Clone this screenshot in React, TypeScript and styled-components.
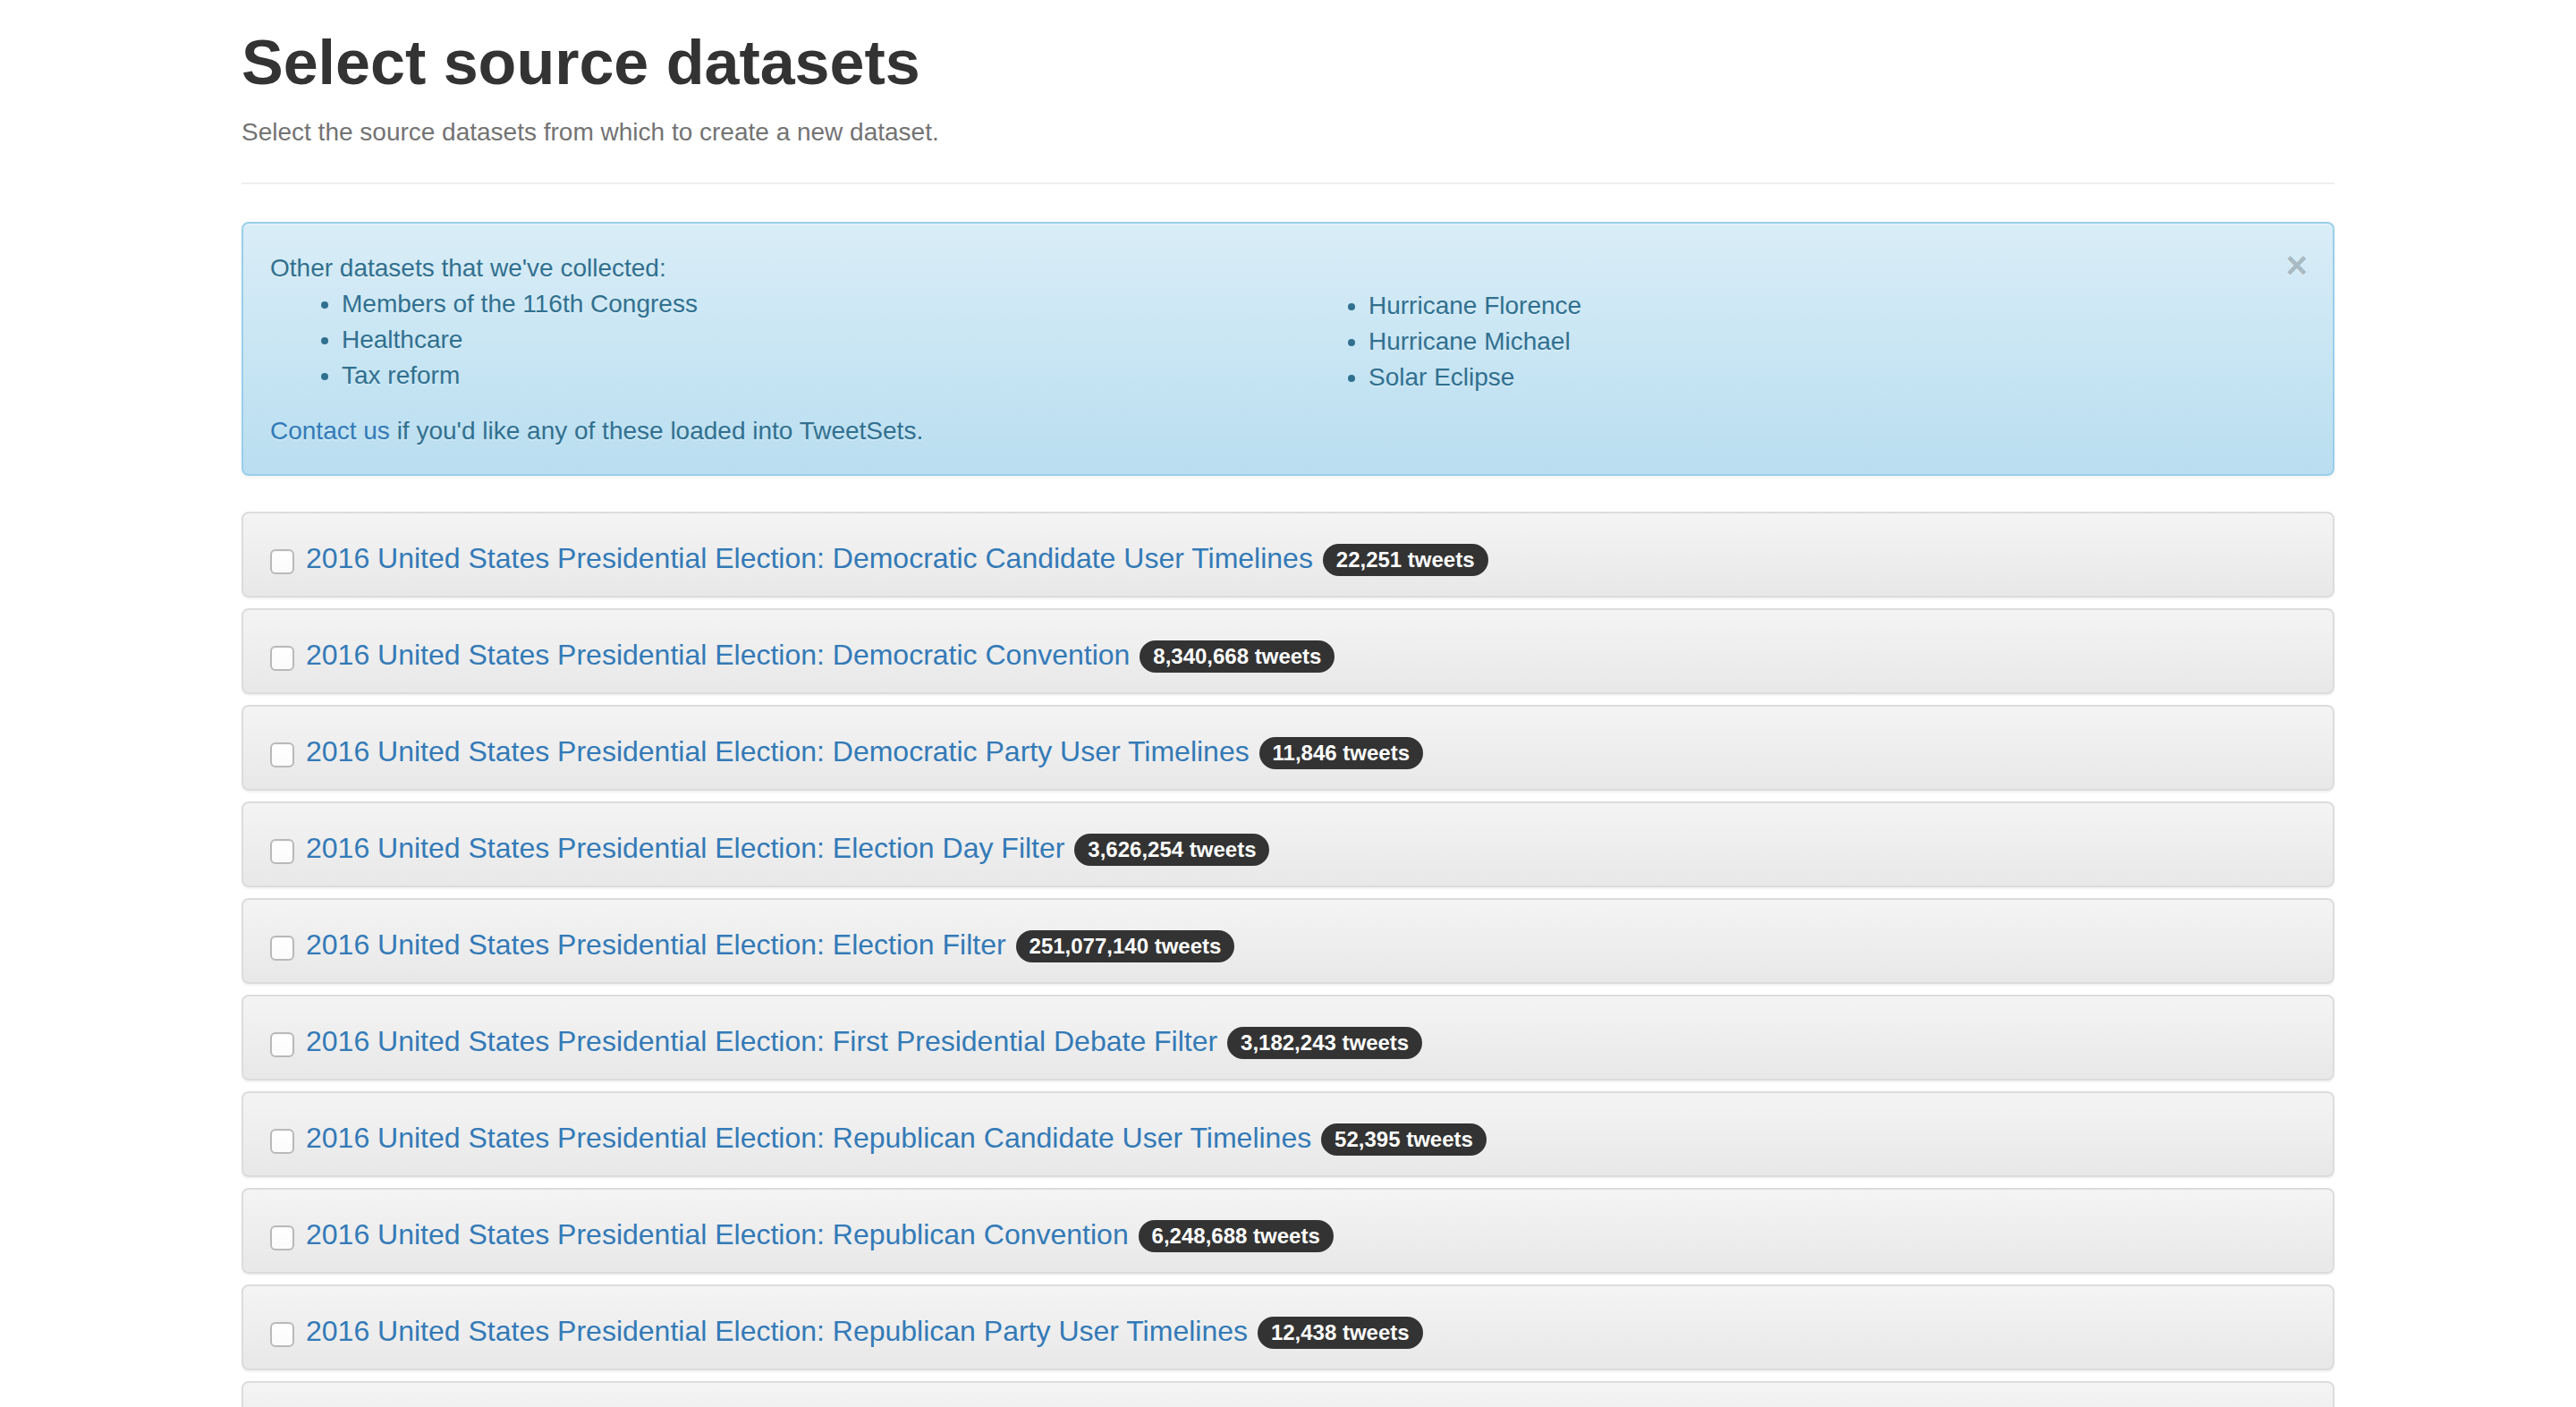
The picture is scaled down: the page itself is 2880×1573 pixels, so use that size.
import React from "react";
import styled, { createGlobalStyle } from "styled-components";

const GlobalStyle = createGlobalStyle`
  html, body {
    margin: 0;
    padding: 0;
    background: #ffffff;
  }
  body {
    font-family: "Liberation Sans", Arial, Helvetica, sans-serif;
    font-size: 28px;
    line-height: 40px;
    color: #333333;
  }
  * { box-sizing: border-box; }
`;

const Container = styled.div`
  max-width: 2340px;
  margin: 0 auto;
`;

const PageHeader = styled.header`
  padding-bottom: 16px;
  margin-bottom: 42px;
  border-bottom: 2px solid #eeeeee;
`;

const Title = styled.h1`
  margin: 30px 0 18px;
  font-size: 70px;
  line-height: 80px;
  font-weight: 700;
  color: #333333;
`;

const Lead = styled.p`
  margin: 0 0 20px;
  font-size: 28px;
  line-height: 40px;
  color: #737373;
`;

const Alert = styled.div`
  position: relative;
  padding: 30px 70px 28px 30px;
  margin-bottom: 40px;
  border: 2px solid #9acfea;
  border-radius: 8px;
  color: #31708f;
  background-image: linear-gradient(to bottom, #d9edf7 0%, #b9def0 100%);
  box-shadow: inset 0 2px 0 rgba(255, 255, 255, 0.25), 0 2px 4px rgba(0, 0, 0, 0.05);
  text-shadow: 0 2px 0 rgba(255, 255, 255, 0.2);
`;

const CloseButton = styled.button`
  position: absolute;
  top: 26px;
  right: 28px;
  padding: 0;
  border: 0;
  background: transparent;
  font-family: "Liberation Sans", Arial, sans-serif;
  font-size: 42px;
  font-weight: 700;
  line-height: 1;
  color: #000000;
  opacity: 0.2;
  text-shadow: 0 2px 0 #ffffff;
  cursor: pointer;
`;

const AlertText = styled.p`
  margin: 0;
`;

const Columns = styled.div`
  display: grid;
  grid-template-columns: 1fr 1fr;
  column-gap: 60px;
`;

const BulletList = styled.ul<{ $offset?: number }>`
  margin: ${(p) => p.$offset ?? 0}px 0 20px;
  padding-left: 80px;
  list-style: disc;
  line-height: 40px;
`;

const AlertLink = styled.a`
  color: #337ab7;
  text-decoration: none;
`;

const DatasetList = styled.div`
  display: flex;
  flex-direction: column;
  gap: 12px;
`;

const DatasetPanel = styled.div`
  border: 2px solid #dcdcdc;
  border-radius: 8px;
  background-image: linear-gradient(to bottom, #f4f4f4 0%, #e8e8e8 100%);
  box-shadow: 0 2px 2px rgba(0, 0, 0, 0.05);
  padding: 30px 30px 22px;
`;

const DatasetRow = styled.label`
  display: flex;
  align-items: center;
  height: 40px;
  gap: 13px;
`;

const Check = styled.input`
  appearance: none;
  -webkit-appearance: none;
  flex: none;
  width: 27px;
  height: 28px;
  margin: 8px 0 0;
  border: 2px solid #b9b9b9;
  border-radius: 6px;
  background: linear-gradient(to bottom, #ffffff 0%, #fbfbfb 100%);
  box-shadow: inset 0 1px 1px rgba(0, 0, 0, 0.04);
`;

const DatasetTitle = styled.span`
  font-size: 32px;
  line-height: 40px;
  white-space: nowrap;
`;

const DatasetLink = styled.a`
  color: #337ab7;
  text-decoration: none;
`;

const Badge = styled.span`
  display: inline-block;
  margin-left: 2px;
  padding: 6px 15px;
  font-size: 24px;
  font-weight: 700;
  line-height: 1;
  color: #ffffff;
  background: #333333;
  border-radius: 20px;
  vertical-align: middle;
  white-space: nowrap;
`;

const datasets: { name: string; count: string }[] = [
  { name: "Democratic Candidate User Timelines", count: "22,251" },
  { name: "Democratic Convention", count: "8,340,668" },
  { name: "Democratic Party User Timelines", count: "11,846" },
  { name: "Election Day Filter", count: "3,626,254" },
  { name: "Election Filter", count: "251,077,140" },
  { name: "First Presidential Debate Filter", count: "3,182,243" },
  { name: "Republican Candidate User Timelines", count: "52,395" },
  { name: "Republican Convention", count: "6,248,688" },
  { name: "Republican Party User Timelines", count: "12,438" },
  { name: "Second Presidential Debate Filter", count: "2,834,119" },
];

export default function App() {
  return (
    <>
      <GlobalStyle />
      <Container>
        <PageHeader>
          <Title>Select source datasets</Title>
          <Lead>Select the source datasets from which to create a new dataset.</Lead>
        </PageHeader>

        <Alert role="alert">
          <CloseButton type="button" aria-label="Close">
            ×
          </CloseButton>
          <AlertText>Other datasets that we've collected:</AlertText>
          <Columns>
            <BulletList>
              <li>Members of the 116th Congress</li>
              <li>Healthcare</li>
              <li>Tax reform</li>
            </BulletList>
            <BulletList $offset={2}>
              <li>Hurricane Florence</li>
              <li>Hurricane Michael</li>
              <li>Solar Eclipse</li>
            </BulletList>
          </Columns>
          <AlertText>
            <AlertLink href="#">Contact us</AlertLink> if you'd like any of these loaded into TweetSets.
          </AlertText>
        </Alert>

        <DatasetList>
          {datasets.map((d) => (
            <DatasetPanel key={d.name}>
              <DatasetRow>
                <Check type="checkbox" />
                <DatasetTitle>
                  <DatasetLink href="#">
                    2016 United States Presidential Election: {d.name}
                  </DatasetLink>{" "}
                  <Badge>{d.count} tweets</Badge>
                </DatasetTitle>
              </DatasetRow>
            </DatasetPanel>
          ))}
        </DatasetList>
      </Container>
    </>
  );
}
